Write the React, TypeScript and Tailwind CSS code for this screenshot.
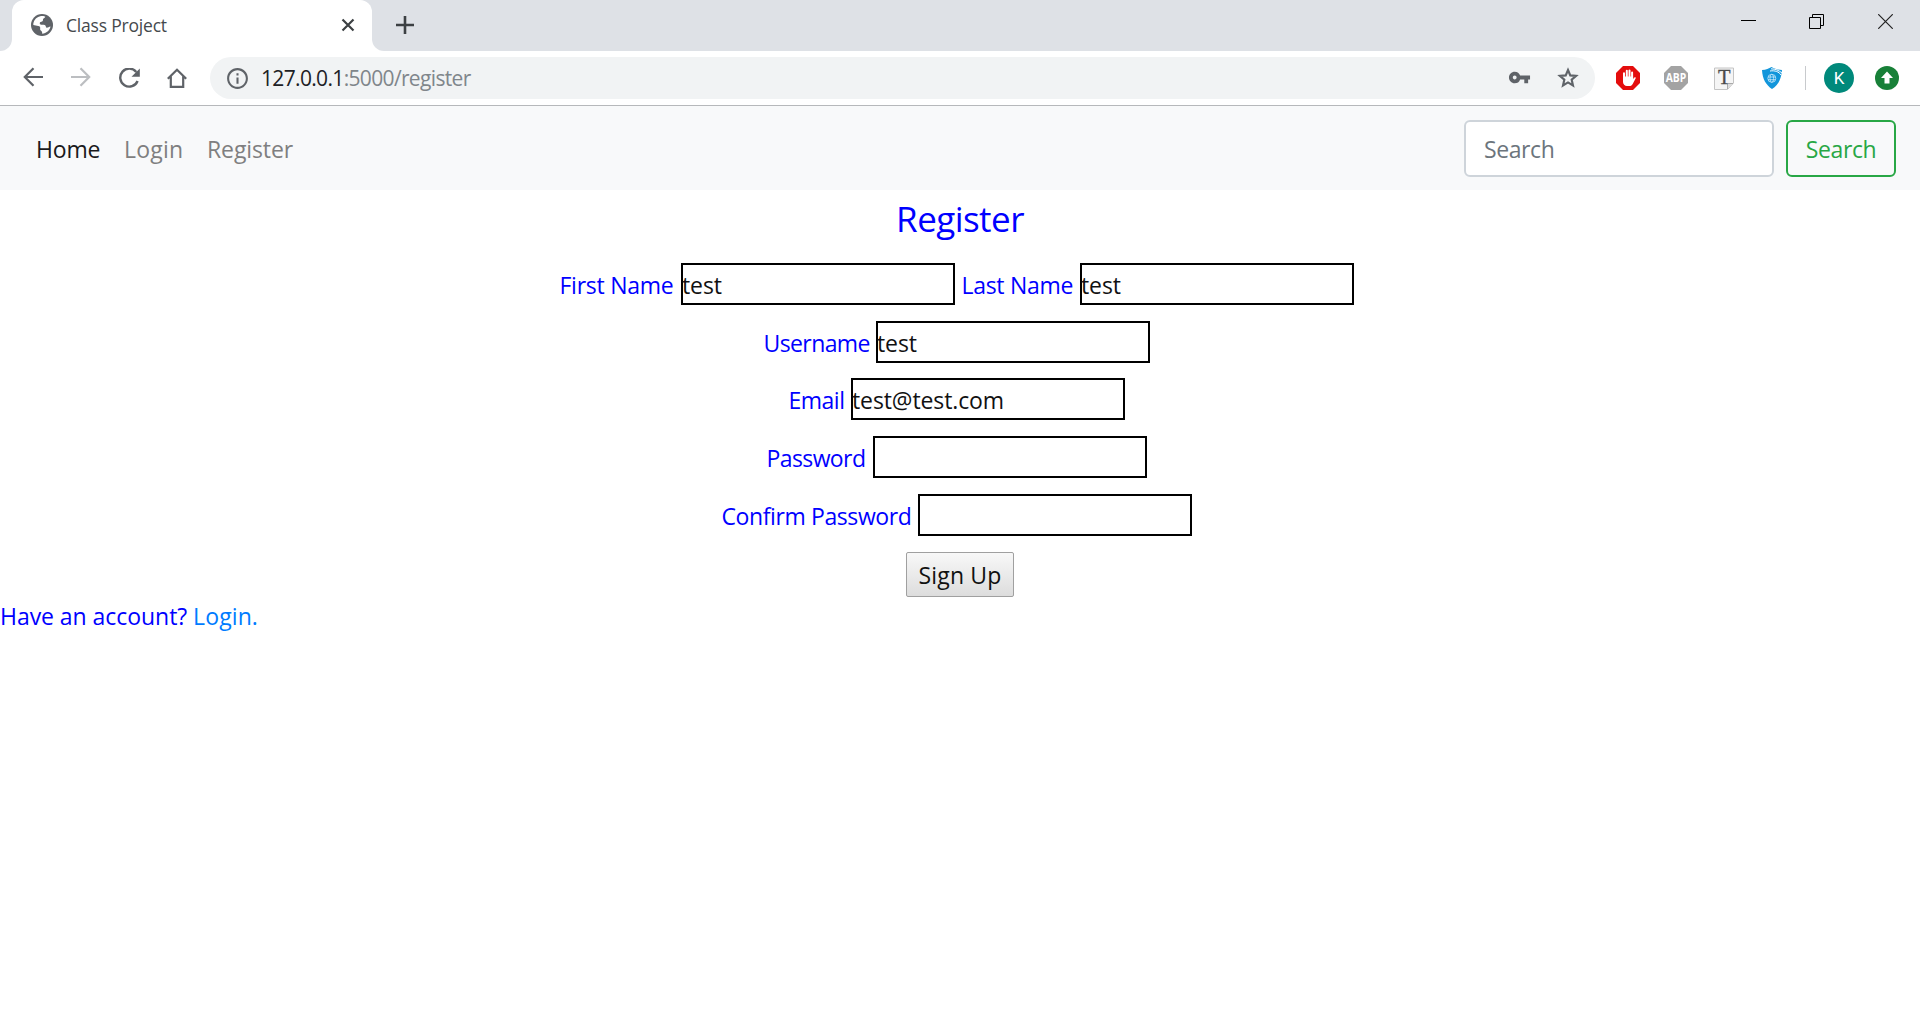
import { MdInfoOutline, MdVpnKey } from "react-icons/md";

function Globe() {
  return (
    <svg className="size-[22px] shrink-0" viewBox="0 0 22 22">
      <circle cx="11" cy="11" r="11" fill="#5f6368" />
      <path
        d="M8.500 2.500C11 1.700 13.500 2 14.300 2.800c-.3 1.200-1.800 1.200-2.200 2.300-.3 1.200.2 1.800-1 2.400-1 .5-2.100.4-2.300 1.500-.1 1 .4 1.700 1.600 1.800 1.700.1 3.200-.2 4 .8.700 1 .3 2 1.500 2.200 1.200 0 2-.8 3.600-1.200-.8 4-4.200 6.700-8.300 7.200.1-1.600-.3-2.400-1.100-3-.9-.7-1.100-1.300-.9-2.500.2-1.300-.4-2-1.900-2.300-1.800-.3-3.300-.6-5-1C2.200 7 4.800 3.600 8.500 2.500z"
        fill="#fff"
      />
      <path d="M16.500 4.200c1.800 1.500 3 3.900 3.100 6.200-1.700-.5-2.900-1.100-4.100-2.200" fill="#5f6368" />
    </svg>
  );
}

function TabStrip() {
  return (
    <div className="flex h-[51px] bg-[#dee1e6]">
      <div className="flex w-3 bg-white">
        <div className="w-3 rounded-br-[12px] bg-[#dee1e6]" />
      </div>
      <div className="flex bg-[#dee1e6]">
        <div className="flex h-[51px] w-[360px] items-center rounded-t-[12px] bg-white pl-[19px] pr-[17px]">
          <div className="-mt-px">
            <Globe />
          </div>
          <span className="ml-[13px] mb-[2px] grow text-[17.5px] leading-6 tracking-[-0.2px] text-[#45494d]">Class Project</span>
          <svg className="mb-px size-[14px] shrink-0" viewBox="0 0 14 14" fill="none" stroke="#3c4043" strokeWidth="2.2">
            <path d="M1.5 1.5l11 11M12.5 1.5l-11 11" />
          </svg>
        </div>
      </div>
      <div className="flex grow bg-white">
        <div className="flex grow rounded-bl-[12px] bg-[#dee1e6]">
          <svg className="ml-6 mt-4 size-[18px]" viewBox="0 0 18 18" fill="none" stroke="#3c4043" strokeWidth="2.6">
            <path d="M9 0v18M0 9h18" />
          </svg>
          <div className="ml-auto mr-[27px] mt-[14px] flex">
            <svg className="size-[15px]" viewBox="0 0 15 15" fill="none" stroke="#000">
              <path d="M0 6.5h15" />
            </svg>
            <svg className="ml-[53px] size-[15px]" viewBox="0 0 15 15" fill="none" stroke="#000">
              <path d="M.5 3.5h11v11H.5zM3.5 3.5v-3h11v11h-3" />
            </svg>
            <svg className="ml-[54px] size-[15px]" viewBox="0 0 15 15" fill="none" stroke="#222" strokeWidth="1.2">
              <path d="M.2.2l14.600 14.600M14.800.2L.2 14.800" />
            </svg>
          </div>
        </div>
      </div>
    </div>
  );
}

function Extensions() {
  return (
    <div className="ml-[21px] flex items-center">
      <svg className="size-6" viewBox="0 0 24 24">
        <path d="M7 0h10l7 7v10l-7 7H7l-7-7V7z" fill="#e40d0d" />
        <path d="M8 13V7.200M10.800 12V4.800M13.500 12V4.600M16.100 13V6.500" stroke="#fff" strokeWidth="2" strokeLinecap="round" />
        <path d="M7 10.500h10.100V13l1.300-1.600c.7-.6 1.700.1 1.300.9l-3 5.700c-1 1.700-2.100 2-3.700 2h-2c-2.300 0-4-1.700-4-4z" fill="#fff" />
      </svg>
      <svg className="ml-6 size-6" viewBox="0 0 24 24">
        <path d="M7 0h10l7 7v10l-7 7H7l-7-7V7z" fill="#a3a3a3" />
        <text x="12" y="16.300" textAnchor="middle" textLength="20.500" lengthAdjust="spacingAndGlyphs" fontFamily="Open Sans, sans-serif" fontWeight="700" fontSize="12" fill="#fff">
          ABP
        </text>
      </svg>
      <svg className="ml-[26px] h-[23px] w-5" viewBox="0 0 20 23">
        <path d="M.5 1h19v15l-6 6.500H.5z" fill="#f5f5f5" stroke="#c4c4c4" />
        <path d="M13.500 22v-5.500h5.500" fill="#ddd" stroke="#aaa" />
        <text x="10.300" y="17" textAnchor="middle" fontFamily="Liberation Serif, serif" fontSize="20.500" fill="#4a4a4a" stroke="#4a4a4a" strokeWidth=".3">
          T
        </text>
      </svg>
      <svg className="ml-7 h-[22px] w-5" viewBox="0 0 20 22">
        <path d="M0 3C4 2.800 7 1.600 9.500 0c2.800 1.700 6 2.800 10.500 3-.5 9-4 15-10 19C4 18 .5 12 0 3z" fill="#1296db" />
        <path d="M8 4c5-.8 9 .8 11 4M9 1.800c4.500.2 8 1.600 11 4.200" fill="none" stroke="#fff" strokeWidth="1" />
        <g fill="none" stroke="#c8e9fa" strokeWidth=".8">
          <circle cx="9.800" cy="11.300" r="4" />
          <ellipse cx="9.800" cy="11.300" rx="1.800" ry="4" />
          <path d="M6 10h7.600M6 12.700h7.600" />
        </g>
      </svg>
      <div className="ml-[23px] h-6 w-px bg-[#c8cacd]" />
      <div className="ml-[18px] flex size-[30px] items-center justify-center rounded-full bg-[#00897b] font-['Roboto',sans-serif] text-[17px] leading-none text-white">
        K
      </div>
      <svg className="ml-[21px] size-6" viewBox="0 0 24 24">
        <circle cx="12" cy="12" r="12" fill="#188038" />
        <path d="M12 5.500l6 6.500h-3.500v5.500h-5V12H6z" fill="#fff" />
      </svg>
    </div>
  );
}

function Toolbar() {
  return (
    <div className="flex h-[55px] items-center border-b border-[#b6b8bb] bg-white pl-[23px]">
      <svg className="mb-[2px] size-5" viewBox="0 0 20 20" fill="none" stroke="#5f6368" strokeWidth="2.200">
        <path d="M20 10H2M10.500 1.300L1.800 10l8.700 8.700" />
      </svg>
      <svg className="mb-[2px] ml-7 size-5" viewBox="0 0 20 20" fill="none" stroke="#bcbec1" strokeWidth="2.200">
        <path d="M0 10h18M9.500 1.300l8.700 8.700-8.700 8.700" />
      </svg>
      <svg className="ml-7 size-[21px]" viewBox="0 0 21 21" fill="none">
        <path d="M17.300 4A9 9 0 1 0 18.600 13" stroke="#5f6368" strokeWidth="2.400" />
        <path d="M20.800.5v8.300h-8.300z" fill="#5f6368" />
      </svg>
      <svg className="ml-[27px] size-5" viewBox="0 0 20 20" fill="none" stroke="#5f6368" strokeWidth="2.200">
        <path d="M.8 10.700L10 1.700l9.200 9M3.800 8.500v10.300h12.400V8.500" />
      </svg>
      <div className="ml-[23px] flex h-[42px] w-[1385px] items-center rounded-full bg-[#f1f3f4] pl-[15px] pr-[14px]">
        <MdInfoOutline className="size-[25px] text-[#5f6368]" />
        <div className="ml-[11px] flex grow text-[21px] leading-7 tracking-[-0.660px]">
          <span className="text-[#202124]">127.0.0.1</span>
          <span className="text-[#80868b]">:5000/register</span>
        </div>
        <MdVpnKey className="mb-px size-[23px] text-[#5f6368]" />
        <svg className="ml-6 size-[26px]" viewBox="0 0 24 24" fill="none" stroke="#5f6368" strokeWidth="2">
          <path d="M12 4.600l2.100 5 5.400.5-4.100 3.500 1.200 5.300-4.600-2.800-4.600 2.800 1.200-5.300-4.100-3.500 5.400-.5z" />
        </svg>
      </div>
      <Extensions />
    </div>
  );
}

function Navbar() {
  return (
    <nav className="flex h-[84px] items-center bg-[#f8f9fa] pl-9 pr-6">
      <div className="flex grow gap-6 pt-px text-[23px] leading-9">
        <a className="w-[64px] whitespace-nowrap tracking-[-0.2px] text-[#1a1a1b]">Home</a>
        <a className="w-[59px] whitespace-nowrap tracking-[0.2px] text-[#7f7f80]">Login</a>
        <a className="whitespace-nowrap tracking-[-0.1px] text-[#7f7f80]">Register</a>
      </div>
      <div className="mt-px flex h-[57px] w-[310px] items-center rounded-[6px] border-2 border-[#ced4da] bg-white pl-[18px] pt-[2px] text-[23px] tracking-[-0.4px] text-[#6c757d]">
        Search
      </div>
      <button className="ml-3 mt-px flex h-[57px] w-[110px] items-center justify-center rounded-[6px] border-2 border-[#28a745] pt-[2px] text-[23px] tracking-[-0.4px] text-[#28a745]">
        Search
      </button>
    </nav>
  );
}

type FieldProps = { label: string; labelClass: string; value?: string; className?: string };

function Field({ label, labelClass, value, className = "" }: FieldProps) {
  return (
    <label className={`flex h-[42px] items-center ${className}`}>
      <span className={`whitespace-nowrap pt-[2px] ${labelClass}`}>
        <span className="-ml-[0.5px]">{label}</span>
      </span>
      <span className="flex h-[42px] w-[274px] items-center border-2 border-black pt-[2px] tracking-[-0.1px] text-[#111]">
        <span className="-ml-px">{value}</span>
      </span>
    </label>
  );
}

export default function App() {
  return (
    <div className="flex h-[1020px] w-[1920px] flex-col overflow-hidden bg-white font-['Open_Sans','Noto_Sans',sans-serif] font-[370]">
      <TabStrip />
      <Toolbar />
      <Navbar />
      <main className="text-[23px] leading-9 text-[#0000ff]">
        <h2 className="h-[73px] pt-[7px] text-center text-[35px] leading-[43px] tracking-[-0.55px]">Register</h2>
        <form className="flex flex-col items-center gap-4 pr-[6px]">
          <div className="flex gap-[7px]">
            <Field label="First Name" value="test" labelClass="w-[121px] tracking-[-0.25px]" />
            <Field label="Last Name" value="test" labelClass="w-[118px] tracking-[-0.3px]" />
          </div>
          <Field label="Username" value="test" labelClass="w-[112px] tracking-[-0.6px]" />
          <Field label="Email" value="test@test.com" labelClass="w-[62px] tracking-[-0.5px]" className="-mt-px" />
          <Field label="Password" labelClass="w-[106px] tracking-[-0.6px]" />
          <Field label="Confirm Password" labelClass="w-[196px] tracking-[-0.4px]" />
          <button className="ml-[6px] flex h-[45px] w-[108px] items-center justify-center rounded-[2px] border border-[#a0a0a0] bg-gradient-to-b from-[#f8f8f8] to-[#dddddd] pt-px tracking-[0.15px] text-[#111]">
            Sign Up
          </button>
        </form>
        <p className="mt-px tracking-[-0.05px]">
          Have an account? <a className="tracking-[0.1px] text-[#007bff]">Login.</a>
        </p>
      </main>
    </div>
  );
}
